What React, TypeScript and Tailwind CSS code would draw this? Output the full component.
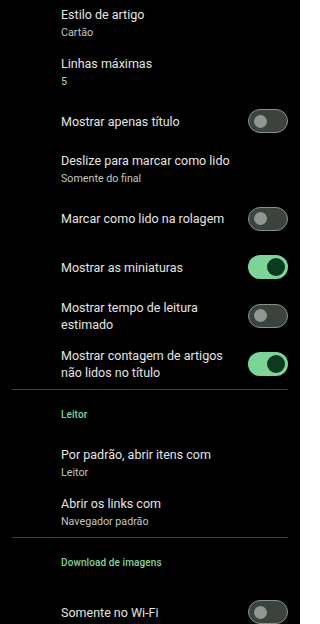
import React from "react";

type Item =
  | { kind: "text"; title: string; sub?: string; toggle?: boolean }
  | { kind: "divider" }
  | { kind: "header"; label: string };

const items: Item[] = [
  { kind: "text", title: "Estilo de artigo", sub: "Cartão" },
  { kind: "text", title: "Linhas máximas", sub: "5" },
  { kind: "text", title: "Mostrar apenas título", toggle: false },
  { kind: "text", title: "Deslize para marcar como lido", sub: "Somente do final" },
  { kind: "text", title: "Marcar como lido na rolagem", toggle: false },
  { kind: "text", title: "Mostrar as miniaturas", toggle: true },
  { kind: "text", title: "Mostrar tempo de leitura estimado", toggle: false },
  { kind: "text", title: "Mostrar contagem de artigos não lidos no título", toggle: true },
  { kind: "divider" },
  { kind: "header", label: "Leitor" },
  { kind: "text", title: "Por padrão, abrir itens com", sub: "Leitor" },
  { kind: "text", title: "Abrir os links com", sub: "Navegador padrão" },
  { kind: "divider" },
  { kind: "header", label: "Download de imagens" },
  { kind: "text", title: "Somente no Wi-Fi", toggle: false },
];

function Switch({ on }: { on: boolean }) {
  if (on) {
    return (
      <div className="w-10 h-6 shrink-0 rounded-full bg-[#7ad596] flex items-center justify-end pr-[3px]">
        <div className="w-[18px] h-[18px] rounded-full bg-[#0b3a1f]" />
      </div>
    );
  }
  return (
    <div className="w-10 h-6 shrink-0 rounded-full bg-[#3c423d] border-[1.5px] border-[#8a918a] flex items-center pl-[5px]">
      <div className="w-[13px] h-[13px] rounded-full bg-[#8e988e]" />
    </div>
  );
}

export default function App() {
  return (
    <div
      className="w-[300px] h-[624px] overflow-hidden bg-black flex flex-col"
      style={{ fontFamily: "Roboto, 'Noto Sans', sans-serif" }}
    >
      {items.map((it, i) => {
        if (it.kind === "divider") {
          return <div key={i} className="h-px shrink-0 mx-3 bg-[#3e423e]" />;
        }
        if (it.kind === "header") {
          return (
            <div key={i} className="h-[50px] shrink-0 flex items-center pl-[61px]">
              <span className="text-[10px] leading-[14px] font-medium tracking-[0.1px] text-[#7fd59a]">
                {it.label}
              </span>
            </div>
          );
        }
        return (
          <div key={i} className="h-[48.6px] shrink-0 flex items-center pl-[61px] pr-3">
            <div className="flex-1 min-w-0 mr-4 flex flex-col">
              <span className="text-[12.5px] leading-[17px] font-normal text-[#e4e5e0]">{it.title}</span>
              {it.sub && (
                <span className="text-[10.7px] leading-[19px] text-[#c3c8c1]">{it.sub}</span>
              )}
            </div>
            {it.toggle !== undefined && <Switch on={it.toggle} />}
          </div>
        );
      })}
    </div>
  );
}
